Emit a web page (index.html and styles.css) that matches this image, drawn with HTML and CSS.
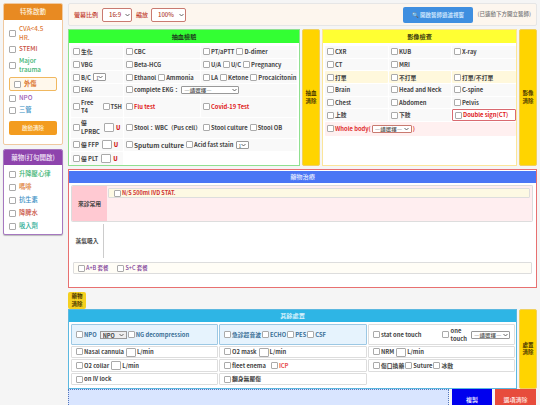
FILE: index.html
```html
<!DOCTYPE html>
<html lang="zh-Hant">
<head>
<meta charset="utf-8">
<title>急診醫囑</title>
<link rel="stylesheet" href="styles.css">
</head>
<body>
<div class="page">
  <aside class="side">
    <section class="sbox sbox-orange">
      <h2 class="shead shead-orange">特殊啟動</h2>
      <div class="slist">
        <label class="sitem t-orange"><input type="checkbox"><span>CVA&lt;4.5<br>HR.</span></label>
        <label class="sitem t-red"><input type="checkbox"><span>STEMI</span></label>
        <label class="sitem t-green"><input type="checkbox"><span>Major<br>trauma</span></label>
        <label class="sitem sitem-box t-orange"><input type="checkbox"><span>外傷</span></label>
        <label class="sitem t-purple"><input type="checkbox"><span>NPO</span></label>
        <label class="sitem t-blue"><input type="checkbox"><span>三管</span></label>
        <button class="sbtn">啟動清除</button>
      </div>
    </section>
    <section class="sbox sbox-purple">
      <h2 class="shead shead-purple">藥物(打勾開啟)</h2>
      <div class="slist slist-drug">
        <label class="sitem t-green"><input type="checkbox"><span>升降壓心律</span></label>
        <label class="sitem t-orange"><input type="checkbox"><span>嗎啡</span></label>
        <label class="sitem t-blue"><input type="checkbox"><span>抗生素</span></label>
        <label class="sitem t-red"><input type="checkbox"><span>降脾水</span></label>
        <label class="sitem t-teal"><input type="checkbox"><span>吸入劑</span></label>
      </div>
    </section>
  </aside>

  <main class="main">
    <div class="topbar">
      <span class="toplabel">螢幕比例</span>
      <select class="sel topsel topsel-a"><option>16:9</option></select>
      <span class="toplabel">縮放</span>
      <select class="sel topsel topsel-b"><option>100%</option></select>
      <button class="viewbtn">🔍 開啟醫師過濾視窗</button>
      <span class="topnote">(已連動下方開立醫師)</span>
    </div>

    <div class="orders">
      <section class="panel panel-green">
        <h2 class="phead phead-green">抽血檢驗</h2>
        <div class="labgrid">
          <label class="cell"><input type="checkbox">生化</label>
          <label class="cell"><input type="checkbox">CBC</label>
          <div class="cell"><label><input type="checkbox">PT/aPTT</label><label><input type="checkbox">D-dimer</label></div>

          <label class="cell"><input type="checkbox">VBG</label>
          <label class="cell"><input type="checkbox">Beta-HCG</label>
          <div class="cell"><label><input type="checkbox">U/A</label><label><input type="checkbox">U/C</label><label><input type="checkbox">Pregnancy</label></div>

          <div class="cell"><label><input type="checkbox">B/C</label><select class="sel minisel"><option>1</option></select></div>
          <div class="cell"><label><input type="checkbox">Ethanol</label><label><input type="checkbox">Ammonia</label></div>
          <div class="cell"><label><input type="checkbox">LA</label><label><input type="checkbox">Ketone</label><label><input type="checkbox">Procalcitonin</label></div>

          <label class="cell"><input type="checkbox">EKG</label>
          <div class="cell span2"><label><input type="checkbox">complete EKG：</label><select class="sel choosesel"><option>—請選擇—</option></select></div>

          <div class="cell cell-tall"><input type="checkbox"><span class="twoline">Free<br>T4</span><label class="push"><input type="checkbox">TSH</label></div>
          <label class="cell t-flag"><input type="checkbox">Flu test</label>
          <label class="cell t-flag"><input type="checkbox">Covid-19 Test</label>

          <div class="cell cell-tall2"><input type="checkbox"><span class="twoline">優<br>LPRBC</span><span class="unitbox"></span><b class="u">U</b></div>
          <div class="cell span2"><label><input type="checkbox">Stool：WBC（Pus cell）</label><label><input type="checkbox">Stool culture</label><label><input type="checkbox">Stool OB</label></div>

          <div class="cell"><label><input type="checkbox">優 FFP</label><span class="unitbox unit-auto"></span><b class="u">U</b></div>
          <div class="cell span2"><label class="big"><input type="checkbox">Sputum culture</label><label><input type="checkbox">Acid fast stain</label><select class="sel minisel"><option>1</option></select></div>

          <div class="cell"><label><input type="checkbox">優 PLT</label><span class="unitbox"></span><b class="u">U</b></div>
        </div>
      </section>
      <button class="clearbar">抽血<br>清除</button>

      <section class="panel panel-yellow">
        <h2 class="phead phead-yellow">影像檢查</h2>
        <div class="imggrid">
          <label class="cell"><input type="checkbox">CXR</label>
          <label class="cell"><input type="checkbox">KUB</label>
          <label class="cell"><input type="checkbox">X-ray</label>

          <label class="cell"><input type="checkbox">CT</label>
          <label class="cell span2"><input type="checkbox">MRI</label>

          <label class="cell cell-cream"><input type="checkbox">打單</label>
          <label class="cell cell-cream"><input type="checkbox">不打單</label>
          <label class="cell cell-cream"><input type="checkbox">打單/不打單</label>

          <label class="cell"><input type="checkbox">Brain</label>
          <label class="cell"><input type="checkbox">Head and Neck</label>
          <label class="cell"><input type="checkbox">C-spine</label>

          <label class="cell"><input type="checkbox">Chest</label>
          <label class="cell"><input type="checkbox">Abdomen</label>
          <label class="cell"><input type="checkbox">Pelvis</label>

          <label class="cell"><input type="checkbox">上肢</label>
          <label class="cell"><input type="checkbox">下肢</label>
          <label class="cell cell-alert"><input type="checkbox">Double sign(CT)</label>

          <div class="cell cell-whole"><input type="checkbox">Whole body(<select class="sel choosesel choosesel-red"><option>—請選擇—</option></select>)</div>
        </div>
      </section>
      <button class="clearbar">影像<br>清除</button>
    </div>

    <section class="panel panel-red">
      <h2 class="phead phead-blue">藥物治療</h2>
      <div class="medrow">
        <div class="medlabel">來診常用</div>
        <div class="medbody"><label class="medchip"><input type="checkbox">N/S 500ml IVD STAT.</label></div>
      </div>
      <div class="steam">
        <div class="steamlabel">蒸氣吸入</div>
      </div>
      <div class="setrow">
        <label><input type="checkbox">A+B 套餐</label>
        <label><input type="checkbox">S+C 套餐</label>
      </div>
    </section>

    <button class="clearchip">藥物<br>清除</button>

    <div class="otherwrap">
      <section class="panel panel-sky">
        <h2 class="phead phead-sky">其餘處置</h2>
        <div class="othergrid">
          <div class="cell cell-sky"><label><input type="checkbox">NPO</label><select class="sel npo"><option>NPO</option></select><label><input type="checkbox">NG decompression</label></div>
          <div class="cell cell-sky"><label><input type="checkbox">急診超音波</label><label><input type="checkbox">ECHO</label><label><input type="checkbox">PES</label><label><input type="checkbox">CSF</label></div>
          <div class="cell cell-plain"><label><input type="checkbox">stat one touch</label><span class="onetouch"><input type="checkbox"><span class="twoline">one<br>touch</span></span><select class="sel choosesel choosesel-s"><option>—請選擇—</option></select></div>

          <div class="cell cell-w"><label><input type="checkbox">Nasal cannula</label><span class="unitbox"></span>L/min</div>
          <div class="cell cell-w"><label><input type="checkbox">O2 mask</label><span class="unitbox"></span>L/min</div>
          <div class="cell cell-w"><label><input type="checkbox">NRM</label><span class="unitbox"></span>L/min</div>

          <div class="cell cell-w"><label><input type="checkbox">O2 collar</label><span class="unitbox"></span>L/min</div>
          <div class="cell cell-w"><label><input type="checkbox">fleet enema</label><label class="icp"><input type="checkbox">ICP</label></div>
          <div class="cell cell-w"><label><input type="checkbox">傷口換藥</label><label><input type="checkbox">Suture</label><label><input type="checkbox">冰敷</label></div>

          <label class="cell cell-w"><input type="checkbox">on IV lock</label>
          <label class="cell cell-w"><input type="checkbox">翻身無壓傷</label>
        </div>
      </section>
      <button class="clearbar">處置<br>清除</button>
    </div>

    <div class="footer">
      <div class="footfill"></div>
      <button class="fbtn fbtn-blue">複製</button>
      <button class="fbtn fbtn-red">選項清除</button>
    </div>
  </main>
</div>
</body>
</html>
```

FILE: styles.css
```css
* { box-sizing: border-box; }
html, body { margin: 0; height: 405px; overflow: hidden; }
body {
  background: #f5f5f5;
  font-family: "Noto Sans CJK TC", "Noto Sans", sans-serif;
  font-size: 5.8px;
  font-weight: 700;
  line-height: 1.25;
  color: #444;
}
button, select { font-family: inherit; }
h2 { margin: 0; font-size: inherit; font-weight: 700; }
label { display: inline-flex; align-items: center; }
input[type="checkbox"] {
  appearance: none;
  flex: none;
  width: 7px;
  height: 7px;
  margin: 0 1px 0 0;
  background: #fff;
  border: 0.75px solid #aaa;
  border-radius: 1px;
}
.sel {
  appearance: none;
  -webkit-appearance: none;
  background: #fff url("data:image/svg+xml,%3Csvg xmlns='http://www.w3.org/2000/svg' width='5' height='4' viewBox='0 0 5 4'%3E%3Cpath d='M.5 1 2.5 3 4.5 1' fill='none' stroke='%23444' stroke-width='.8'/%3E%3C/svg%3E") no-repeat right 1.5px center;
  color: #444;
  flex: none;
}
.page { display: flex; gap: 5px; padding: 3px 3px 0; width: 540px; }

/* sidebar */
.side { width: 60px; flex: none; display: flex; flex-direction: column; gap: 4px; }
.sbox { background: #fff; border-radius: 2px; overflow: hidden; }
.sbox-orange { border: 1px solid #f0c9a0; height: 142px; }
.sbox-purple { border: 1px solid #a678c0; height: 86px; box-shadow: 0 1px 1px #bbb; }
.shead { color: #fdf0dc; text-align: center; font-size: 6.5px; font-weight: 500; line-height: 15px; height: 16px; }
.shead-orange { background: #e88a22; }
.shead-purple { background: #8e44ad; height: 15px; line-height: 15px; color: #f2e4f8; }
.slist { display: flex; flex-direction: column; padding: 5px 5px 0; gap: 3px; }
.slist-drug { padding-top: 5px; gap: 4px; }
.sitem { gap: 3px; min-height: 9px; font-size: 6.3px; line-height: 8.5px; font-weight: 500; }
.sitem input { margin-right: 0; }
.sitem-box { height: 14px; padding-left: 4px; border: 1px solid #f0b860; border-radius: 2px; background: #fff8ec; margin: 0; font-weight: 700; }
.sbtn {
  height: 14px; margin-top: 3px; padding: 0;
  background: #f39c1f; color: #fff3dc; border: 0; border-radius: 2px;
  font-size: 5.5px; font-weight: 500;
}
.t-orange { color: #dd7a35; }
.t-red { color: #c9503f; }
.t-green { color: #3cb371; }
.t-purple { color: #9b59b6; }
.t-blue { color: #3a8fc4; }
.t-teal { color: #20a890; }

/* main */
.main { width: 469px; flex: none; display: flex; flex-direction: column; }
.topbar {
  height: 23px; display: flex; align-items: center;
  background: #fdf6ee; border: 1px solid #e6e6e6; border-radius: 2px;
  padding: 0 5px; color: #c0392b;
}
.toplabel { font-size: 6px; font-weight: 500; white-space: nowrap; }
.topsel {
  height: 14px; border: 1px solid #c97a70; border-radius: 2px;
  font-size: 6px; font-weight: 500; color: #b03a2e; padding: 0 0 0 6px;
}
.topsel-a { width: 30px; margin: 0 4px; }
.topsel-b { width: 35px; margin-left: 3px; }
.viewbtn {
  margin-left: 217px; width: 71px; height: 16px; padding: 0;
  background: #3f8fe0; color: #dbeeff; border: 0; border-radius: 2px;
  font-size: 5.5px; font-weight: 500; white-space: nowrap;
}
.topnote { margin-left: 5px; color: #777; font-size: 5.5px; font-weight: 500; white-space: nowrap; }

.orders { display: flex; gap: 2px; margin-top: 3px; height: 137px; }
.panel { background: #fff; }
.panel-green { width: 232px; border: 1px solid #90e090; }
.panel-yellow { width: 195px; border: 1px solid #fbe59a; }
.phead { text-align: center; height: 13px; line-height: 13px; font-size: 6.2px; }
.phead-green { background: #33ff33; color: #1d3a1d; }
.phead-yellow { background: #ffff33; color: #3c3c10; }
.clearbar {
  width: 18px; flex: none; padding: 0;
  background: #ffd400; border: 1px solid #f0d060; border-radius: 2px;
  color: #4d3a00; font-size: 5.5px; font-weight: 700; line-height: 7.5px;
}
.cell {
  display: flex; align-items: center;
  background: #f9f9f9; border-radius: 1px; padding: 0 0 0 2px;
  min-width: 0; white-space: nowrap;
}
.cell label { margin-right: 2px; }
.span2 { grid-column: span 2; }
.labgrid {
  display: grid; grid-template-columns: 52px 76px 96px;
  grid-template-rows: 11.67px 11.67px 11.67px 11.67px 20px 20px 12.5px 12.5px;
  gap: 1px; padding: 3px 2px 0;
}
.twoline { line-height: 7.5px; font-weight: 700; }
.cell-tall2 .twoline { line-height: 8.5px; }
.push { margin-left: auto; margin-right: 1px !important; }
.t-flag { color: #e02020; }
.unitbox { display: inline-block; flex: none; width: 10px; height: 9px; margin: 0 1px; background: #fff; border: 0.75px solid #aaa; border-radius: 1px; }
.u { color: #d02020; margin-left: 1px; }
.cell-tall2 .unitbox { margin-left: 4px; }
.big { font-size: 6.5px; }
.minisel { width: 13px; height: 8px; padding: 0 0 0 2px; font-size: 5px; border: 0.75px solid #999; border-radius: 1px; }
.choosesel { width: 58px; height: 8px; padding: 0 0 0 2px; font-size: 5.5px; font-weight: 500; border: 0.75px solid #999; border-radius: 1px; }
.choosesel-red { width: 40px; border-color: #c97a70; margin: 0 1px; }
.choosesel-s { width: 39px; margin-left: auto; margin-right: 4px; }

.imggrid {
  display: grid; grid-template-columns: 63px 62px 64px;
  grid-auto-rows: 11.67px; gap: 1px; padding: 3px 2px 0;
}
.cell-cream { background: #fff8dc; }
.cell-alert { background: #fff; color: #e02020; border: 0.5px solid #d96a70; }
.cell-whole { grid-column: 1 / -1; height: 14px; background: #fff0f0; color: #e03030; }

/* meds */
.panel-red { margin-top: 3px; height: 119px; border: 1px solid #e87070; padding: 1px 0 0; }
.phead-blue { background: #4a76f5; color: #e6edff; font-weight: 500; margin-bottom: 2px; height: 12px; line-height: 12px; }
.medrow { display: flex; height: 37px; margin: 0 3px 0 2px; border: 0.5px solid #dcdcdc; border-bottom: 1px solid #ddd; border-radius: 2px; overflow: hidden; }
.medlabel { width: 35px; flex: none; background: #ffc9d2; display: flex; align-items: center; justify-content: center; }
.medbody { flex: 1; background: #ffeef0; padding: 2px 2px 0 1px; }
.medchip { display: flex; height: 10px; padding-left: 5px; background: #fdf9e3; border: 0.5px solid #ddd; border-radius: 1px; color: #d03030; font-size: 5.5px; }
.steam { height: 40px; display: flex; margin-left: 2px; padding-top: 2px; }
.steamlabel { width: 33px; height: 34px; border-right: 0.5px solid #ccc; display: flex; align-items: center; justify-content: center; }
.setrow { display: flex; gap: 9px; align-items: center; height: 12px; margin: 0 4px; padding-left: 4px; background: #fffdf6; border: 0.5px solid #ddd; border-radius: 1px; color: #7d3c98; font-size: 5.5px; font-weight: 500; }

.clearchip {
  align-self: flex-start; width: 18px; height: 17px; margin-top: 4px; padding: 0;
  background: #f5d020; border: 0; border-radius: 2px;
  color: #4d3a00; font-size: 5.5px; line-height: 7.5px; font-weight: 700;
}
.otherwrap { display: flex; gap: 2px; height: 80px; }
.panel-sky { width: 449px; border: 1px solid #5cb8e0; }
.phead-sky { background: #2eb5e5; color: #e6f7ff; font-weight: 500; margin-bottom: 2px; height: 12px; line-height: 12px; }
.othergrid {
  display: grid; grid-template-columns: 147px 148px 147px;
  grid-template-rows: 21px 12px 13px 12px; gap: 1px; padding: 0 2px;
  background: #fff;
}
.cell-sky { background: #e6f3fd; border: 0.5px solid #9cc8e4; border-radius: 1px; color: #3a6f96; padding-left: 4px; }
.cell-plain { background: #fff; border: 0.5px solid #ddd; border-radius: 1px; padding-left: 4px; }
.cell-w { background: #fff; border: 0.5px solid #ddd; border-radius: 1px; padding-left: 4px; }
.othergrid .cell label { margin-right: 1px; }
.npo { width: 27px; height: 8px; padding: 0 0 0 2px; margin: 0 1px 0 2px; font-size: 5.5px; font-weight: 700; background-color: #eee; border: 0.75px solid #999; }
.onetouch { display: inline-flex; align-items: center; gap: 1px; margin-left: 19px; font-weight: 500; }
.icp { margin-left: 4px; color: #e85050; }

.footer { display: flex; height: 20px; }
.footfill { width: 381px; background: #d9e5ff; border-top: 0.5px dotted #5577bb; border-left: 0.5px dotted #5577bb; border-right: 0.5px dotted #5577bb; }
.fbtn { height: 20px; padding: 0; border: 0; color: #eef; font-size: 6px; font-weight: 500; }
.fbtn-blue { width: 40px; margin-left: 3px; background: #0000ee; }
.fbtn-red { width: 41px; margin-left: 3px; background: #e74c3c; color: #ffe4e0; }
```
